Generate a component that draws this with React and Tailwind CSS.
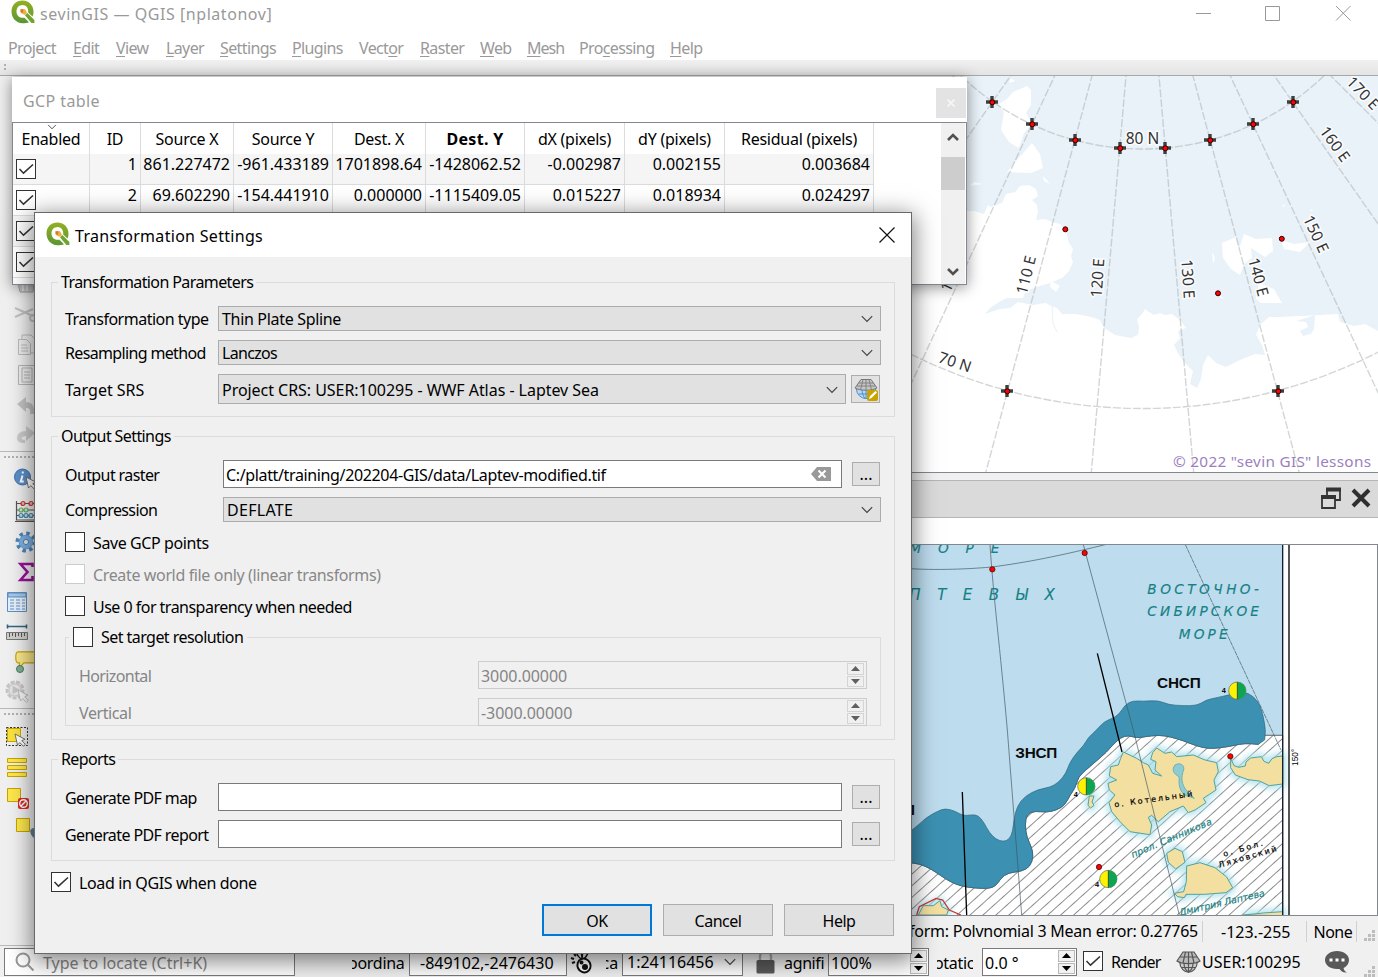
import React from 'react';

const QLogo = ({ className }) => (
  <svg className={className} viewBox="0 0 24 24">
    <defs>
      <linearGradient id="qg" x1="0" y1="0" x2="0" y2="1">
        <stop offset="0" stopColor="#93b023" />
        <stop offset="1" stopColor="#589632" />
      </linearGradient>
    </defs>
    <path fillRule="evenodd" fill="url(#qg)" d="M11.5 .5C17.5 .5 22.500 5 22.500 11.500c0 2-.3 3.500-1 5l-4.300-4c.5-4.500-2-7.500-5.700-7.500-3.600 0-6 2.800-6 6.500s2.400 6.300 6 6.300h2l4.500 4.500c-2 .8-4 1-6.500 1C5 22.800.5 18 .5 11.500S5 .5 11.500.5z" />
    <path fill="#f0b03c" d="M9.500 9.200h4.500l2 3.600-2.200 2.300-3.800-2z" />
    <path fill="#d9772b" d="M9.500 9.200h3l-.5 3.500-2.500-.5z" />
    <path fill="#6fa52d" d="M14 15.200l2.400-2.300 7 7v3.100h-3z" />
  </svg>
);

const Chevron = ({ className = 'h-2 w-3' }) => (
  <svg className={className} viewBox="0 0 12 8" fill="none" stroke="#444" strokeWidth="1.200">
    <path d="M.8 1.200L6 6.400l5.200-5.200" />
  </svg>
);

const Check = ({ on, disabled }) => (
  <span className={'block size-5 shrink-0 border bg-white ' + (disabled ? 'border-[#ccc]' : 'border-[#333]')}>
    {on && (
      <svg className="size-[18px]" viewBox="0 0 18 18" fill="none" stroke="#333" strokeWidth="1.600">
        <path d="M2.500 9l4 4.200L16 4.500" />
      </svg>
    )}
  </span>
);

const Combo = ({ children, className }) => (
  <div className={'flex items-center justify-between border border-[#acacac] bg-[#e1e1e1] pl-[3px] pr-[7px] ' + className}>
    <span>{children}</span>
    <Chevron />
  </div>
);

const DotsButton = ({ className = 'h-6' }) => (
  <div className={'flex w-7 shrink-0 items-center justify-center border border-[#adadad] bg-[#e1e1e1] tracking-normal ' + className}>...</div>
);

const Arrows = ({ dim }) => (
  <div className={'my-px flex w-[17px] shrink-0 flex-col gap-px ' + (dim ? 'mr-[2px]' : 'mr-px')}>
    {['M0 5L4.500 0 9 5z', 'M0 0L4.500 5 9 0z'].map((d) => (
      <div key={d} className={'flex flex-1 items-center justify-center border ' + (dim ? 'border-[#d4d4d4]' : 'border-[#b8b8b8] bg-[#f2f2f2]')}>
        <svg className="h-[5px] w-[9px]" viewBox="0 0 9 5"><path d={d} fill={dim ? '#606060' : '#000'} /></svg>
      </div>
    ))}
  </div>
);

/* ---------- main window toolbar ---------- */

const Cursor = ({ x, y }) => (
  <path transform={`translate(${x} ${y})`} d="M0 0l2.500 11 2.300-2.400 3.600 3.600 2-1.900-3.600-3.600 3.200-1.500z" fill="#fff" stroke="#666" strokeWidth=".9" />
);

const tools = [
  ['h-[30px]', <g key="t" fill="#d4d4d4" stroke="#aaa"><path d="M16 6h18v3H16zM18 10h16l-1 9H20z" /><path d="M23 11v7M27 11v7" stroke="#eee" strokeWidth="2" /></g>],
  ['h-[31px]', <g key="t" fill="none" stroke="#c2c2c2" strokeWidth="2"><path d="M15 5l18 8M15 14l18-8" /><circle cx="33" cy="15" r="3" /></g>],
  ['h-[30px]', <g key="t" fill="#eee" stroke="#bbb"><path d="M22 1h9l4 4v14H22z" /><path d="M18.500 5.500h8l4 4v11h-12z" /><path d="M21 11h6M21 14h7M21 17h7" /></g>],
  ['h-[31px]', <g key="t" fill="#eee" stroke="#b5b5b5"><path d="M18.500 1.500h16v19h-16z" /><path d="M22 4h10v14H22zM24 8h6M24 11h6M24 14h6" /></g>],
  ['h-[29px]', <path key="t" d="M17 9l9-7v5c6 0 9 4 8 12h-4c1-5-1-6-4-6v4z" fill="#c4c4c4" />],
  ['h-[43px]', <path key="t" d="M35 9l-9-7v5c-6 0-9 3-9 7s3 5 8 5v-3c-5 0-4-4 1-4v5z" fill="#ccc" />],
  ['h-[32px]', <g key="t"><circle cx="22.500" cy="9" r="8" fill="#5b8fc9" stroke="#3f73ae" /><path d="M23 3.500l-.5 2M22.500 7.500l-1.700 6h3" stroke="#fff" strokeWidth="2" fill="none" /><Cursor x={26} y={9} /></g>],
  ['h-[31px]', <g key="t" fill="none" stroke="#555" strokeWidth="1.200"><path d="M16.500 1v19H36M16 3.500h20M16 10h20M16 15.500h20M15 21.500h21" /><circle cx="23" cy="3.500" r="2" stroke="#c33" fill="#f2b4b4" /><circle cx="31" cy="3.500" r="2" stroke="#c33" fill="#f2b4b4" /><circle cx="21" cy="10" r="2" stroke="#6a6" fill="#cec" /><circle cx="26" cy="10" r="2" stroke="#6a6" fill="#cec" /><circle cx="21" cy="15.500" r="2" stroke="#48a" fill="#bde" /><circle cx="26" cy="15.500" r="2" stroke="#48a" fill="#bde" /><circle cx="31" cy="15.500" r="2" stroke="#48a" fill="#bde" /></g>],
  ['h-[30px]', <g key="t"><circle cx="26" cy="11" r="8.500" fill="none" stroke="#4d86bd" strokeWidth="4" strokeDasharray="3.400 3.270" /><circle cx="26" cy="11" r="6.800" fill="#7db1e3" stroke="#6a9fd4" /><circle cx="26" cy="11" r="2.600" fill="#efefef" stroke="#4d86bd" /></g>],
  ['h-[30px]', <path key="t" d="M32.500 6V3H20.500l7 8-7 8h12v-4" fill="none" stroke="#9b0f9b" strokeWidth="2.600" />],
  ['h-[30px]', <g key="t" stroke="#5e8fc4" fill="#e6f0fa"><path d="M7.500 1.500h19v19h-19z" /><path d="M8 2h18v4H8z" fill="#a5c8ea" /><path d="M10 9h4M16 9h4M22 9h3M10 12h4M16 12h4M22 12h3M10 15h4M16 15h4M22 15h3M10 18h4M16 18h4M22 18h3" /></g>],
  ['h-[30px]', <g key="t"><path d="M7 5.500h20M7.500 3.500v4M26.500 3.500v4" stroke="#2f6580" strokeWidth="1.600" /><path d="M6.500 11.500h21v7h-21z" fill="#cfcfcb" stroke="#777" /><path d="M9.500 12v4M12.500 12v3M15.500 12v4M18.500 12v3M21.500 12v4M24.500 12v3" stroke="#555" /></g>],
  ['h-[28px]', <g key="t"><path d="M18 .8h20v11H24l-5 5 .5-5h-1.500c-3 0-3-11 0-11z" fill="#fbe68c" stroke="#c9a400" strokeWidth="1.200" /><circle cx="20" cy="18" r="3.500" fill="#7fae92" stroke="#4c7d68" /></g>],
  ['h-[48px]', <g key="t" fill="#e4e4e4" stroke="#c6c6c6"><circle cx="15" cy="11" r="8" strokeWidth="3" strokeDasharray="4 1.500" /><circle cx="15" cy="11" r="6" /><path d="M13 7.500l6 3.500-6 3.500z" fill="#c4c4c4" /><path transform="translate(18 11)" d="M0 0l2.500 11 2.300-2.400 3.600 3.600 2-1.900-3.600-3.600 3.200-1.500z" fill="#f4f4f4" stroke="#bbb" /></g>],
  ['h-[31px]', <g key="t"><path d="M6.500 1.500h21v18h-21z" fill="none" stroke="#333" strokeDasharray="2 1.500" /><path d="M7.500 2.500h13v13h-13z" fill="#fae23c" stroke="#cba800" /><Cursor x={15} y={8} /></g>],
  ['h-[30px]', <g key="t" fill="#fde74c" stroke="#c9a300"><path d="M7.500 1.500h19v4h-19zM7.500 8.500h19v4h-19zM7.500 15.500h19v4h-19z" /></g>],
  ['h-[30px]', <g key="t"><path d="M7.500 1.500h13v13h-13z" fill="#fde74c" stroke="#c9a300" /><rect x="18" y="11" width="11" height="11" rx="2" fill="#d62b2b" /><circle cx="23.500" cy="16.500" r="3.800" fill="none" stroke="#fff" strokeWidth="1.400" /><path d="M21 19l5-5" stroke="#fff" strokeWidth="1.400" /></g>],
  ['h-[30px]', <g key="t"><path d="M16.500 1.500h13v13h-13z" fill="#fde74c" stroke="#c9a300" /><path d="M34 11c-5 0-5 6 0 10z" fill="#5f8291" /></g>],
];

const Tool = ({ h, art }) => (
  <div className={'shrink-0 ' + h}>
    <svg className="h-6 w-10" viewBox="0 0 40 24">{art}</svg>
  </div>
);

const Handle = ({ className }) => (
  <svg className={'h-[12px] w-10 shrink-0 ' + className} viewBox="0 0 40 12">
    <path d="M0 1.500h40" stroke="#b9b9b9" />
    <path d="M4 7h36" stroke="#b0b0b0" strokeWidth="2" strokeDasharray="2 2" />
  </svg>
);

/* ---------- upper map ---------- */

const crosses = [[992, 102], [1032, 124], [1075, 140], [1120, 148], [1165, 148], [1210, 140], [1253, 124], [1293, 102], [1007, 391], [1278, 391]];
const redDots = [[1065, 229], [1281.500, 238.500], [1217.700, 293]];
const meridians = [-45, -35, -25, -15, -5, 5, 15, 25, 35, 45];
const mapLabels = [
  ['80 N', 1142.500, 138, 0], ['110 E', 1026, 275, -76], ['120 E', 1097.500, 278, -86], ['130 E', 1188, 279, 86],
  ['140 E', 1258.500, 277, 75], ['150 E', 1316, 234, 65], ['160 E', 1335, 144, 54], ['170 E', 1363, 93, 46], ['70 N', 955, 362, 19], ['100 E', 953, 273, -65],
];

const UpperMap = () => (
  <svg className="h-[396px] w-[467px] shrink-0" viewBox="911 76 467 396">
    <rect x="911" y="76" width="467" height="397" fill="#e9f2f8" />
    <g fill="#fff">
      <path d="M911 211h63l10 3 4-9 3 2 11-4 4-9 9-2 5-6 9-1 7 4 2 7-6 4 5 5 1 7-2 8 9-1 7 3 8 2 6 8 3 11 4 6-2 7 2 6-4 9-7 7-12 5-10 3-9 3-6 4-2 5-16 0-8 4-9 6-5 6 6-2 9-3 10-1 8-6 15 3 13-2 3 2 8 3 5 6 14 0 15 3 9 3 4 8 11 7 16 3 7-3 1-8-2-8 5-5 3-5 4 3 5 3 6-2 5 2 7-1 9 7 5 7-8 3 2 7-6 7 4 8 6 9 9 9L1190 384l7 4 4-9 2-14 5-10 8 8 10 4 14-7 15-6 10 1-3-10-6-10 4-10 9-8h11l20-1 20-1 18-1 2 8 14 4 11-2 13 7V480H911z" />
      <path d="M999 104l9-6 5-6 14-6 4 4 0 15-5 8 6 11-8 9-5 15-10-6-8-12 3-18z" />
      <path d="M1032 143l8 11 3 14-12 5-24-1 10-12 8-9zM1011 78l4 3-6 2zM1043 176l7 8-6-3zM1051 281l9 5-4 6-6-5zM974 182l8 2-12 2z" />
      <path d="M1222 243l14-6 3 12 5-15 12 5 16-1 1 13-8 6-14-9 1 10-8 6-4 11-9-6-8-11zM1281 240l13 4 16-2-10 10-16-3zM1212 252l3 6-2 6zM1259 283l15 6 8 14-21 0-5-4z" />
      <path d="M1282 206l4-2-2 3zM1311 209l2 2-3 0zM1217 294l8 5-4-1zM1318 174l2 1z" />
    </g>
    <path d="M1296 321l10-3 9-3-1 14-3 5-8 2-3-5 8-4-2-5z" fill="#e9f2f8" />
    <path d="M1052 305l1 18 4 9" fill="none" stroke="#e9f2f8" />
    <g fill="none" stroke="#a9aead" strokeOpacity=".5" strokeWidth="1.400" strokeDasharray="8 2">
      <circle cx="1142.500" cy="-112.500" r="261.500" />
      <circle cx="1142.500" cy="-112.500" r="521" />
      {meridians.map((m) => <path key={m} d="M1142.500 60V640" transform={`rotate(${-m} 1142.500 -112.500)`} />)}
    </g>
    <g fontFamily="'Noto Sans', sans-serif" fontSize="15.500" textAnchor="middle" fill="#333" stroke="#fff" strokeOpacity=".85" strokeWidth="3" paintOrder="stroke">
      {mapLabels.map(([t, x, y, r]) => <text key={t} transform={`translate(${x} ${y}) rotate(${r})`} y="5.500">{t}</text>)}
    </g>
    {crosses.map(([x, y]) => <path key={x} d={`M${x - 6} ${y}h12M${x} ${y - 6}v12`} stroke="#3a4240" strokeWidth="3.400" />)}
    {crosses.concat(redDots).map(([x, y]) => <circle key={x} cx={x + .3} cy={y + .3} r="2.500" fill="#f00" stroke="#300" strokeWidth="1" />)}
    <text x="1371" y="466.500" textAnchor="end" fontFamily="'Noto Sans', sans-serif" fontSize="15.300" textLength="198" fill="#9b7fbe">© 2022 "sevin GIS" lessons</text>
  </svg>
);

/* ---------- lower map ---------- */

const upperEdge = [[0, 305], [25, 285], [50, 262], [80, 245], [105, 235], [135, 243], [160, 258], [185, 254], [205, 256], [222, 278], [238, 308], [258, 328], [280, 335], [298, 328], [308, 305], [312, 265], [322, 228], [345, 198], [385, 178], [420, 172], [445, 158], [468, 130], [478, 100], [500, 68], [520, 48], [535, 22], [560, 0], [582, -25], [608, -35], [628, -48], [645, -75], [668, -88], [700, -86], [745, -89], [775, -76], [815, -73], [862, -73], [888, -90], [920, -97], [960, -106], [1000, -116], [1030, -102], [1050, -75], [1060, -40], [1067, 0], [1064, 30]];
const lowerEdge = [[1045, 43], [1020, 40], [990, 42], [955, 50], [900, 57], [860, 48], [820, 32], [780, 20], [745, 15], [705, 20], [680, 24], [655, 16], [632, 22], [605, 48], [590, 66], [560, 92], [530, 118], [505, 140], [495, 175], [480, 195], [465, 225], [440, 240], [410, 247], [375, 243], [350, 252], [345, 285], [350, 322], [365, 352], [370, 380], [360, 410], [335, 424], [295, 428], [272, 445], [258, 468], [235, 476], [195, 474], [155, 469], [120, 455], [90, 435], [60, 415], [30, 402], [0, 398]];

/* runs a quadratic curve through the midpoints of the given points */
const smooth = (pts) =>
  pts.slice(1, -1).map(([x, y], i) => {
    const [nx, ny] = pts[i + 2];
    return `Q${x} ${y} ${(x + nx) / 2} ${(y + ny) / 2}`;
  }).join('') + 'L' + pts[pts.length - 1].join(' ');

const bandPath = `M0 305${smooth(upperEdge)}L1045 43${smooth(lowerEdge)}z`;
const coastPath = `M1118 16H1066L1045 43${smooth(lowerEdge)}V560H1118z`;

const Pie = ({ x, y, label, lx, ly }) => (
  <g>
    <circle cx={x} cy={y} r="26" fill="#fff200" stroke="#567" strokeWidth="2" />
    <path d={`M${x} ${y - 26}a26 26 0 0 1 0 52z`} fill="#0ea552" />
    <path d={`M${x} ${y - 26}v52`} stroke="#353" strokeWidth="3" />
    <text x={lx} y={ly} fontSize="22" fontWeight="bold">{label}</text>
  </g>
);

const islands = [
  'M640 66L680 85 700 98 715 105 728 130 755 138 735 120 738 95 722 88 728 68 740 54 765 70 785 66 800 80 850 75 885 90 920 98 925 125 912 150 918 180 880 205 888 218 855 240 835 248 820 228 780 245 745 275 725 256 715 262 725 285 720 314 660 305 630 275 605 245 597 218 615 195 598 180 594 160 620 150 598 138 602 110 625 105 632 85z',
  'M962 85l10 22 14 5 20-4 2-12 14-12 32-4 8 14 14 6 10-14 14-6 18-2v84l-40 5-30-14-34-4-38-14-14-22z',
  'M770 370l25-15 22 10 8 32-28 20-22-20z',
  'M830 408l40-10 45 15 35 28 18 32-20 15-65 5-55 0-5 10-20-3-10-10 28-5 8-30z',
  'M538 198l14 0-6 18 6 10-10 8-8-8z',
  'M25 555l15-28 30 0 20-15 5 18 20 10-5 15z',
  'M1000 555l60-6 58-4v12z',
];

const LowerMap = () => (
  <svg className="h-[370px] w-[467px] shrink-0" viewBox="911 545 467 370" fontFamily="'Liberation Sans', Arial, sans-serif">
    <defs>
      <pattern id="hatch" width="26" height="26" patternUnits="userSpaceOnUse" patternTransform="rotate(-42)">
        <path d="M0 13h26" stroke="#666" strokeWidth="2.200" />
      </pattern>
      <filter id="glow" x="-30%" y="-30%" width="160%" height="160%"><feGaussianBlur stdDeviation="9" /></filter>
    </defs>
    <rect x="911" y="545" width="467" height="371" fill="#fff" />
    <rect x="911" y="545" width="372" height="371" fill="#bddcee" />
    <g transform="translate(910 730) scale(.33333)">
      {['#fff', 'url(#hatch)'].map((f) => <path key={f} fill={f} stroke="#666" strokeWidth="2" d={coastPath} />)}
      <path fill="#3c91b3" stroke="#28647d" strokeWidth="2" d={bandPath} />
      <g fill="#9fdfe6" stroke="#a9dfea" strokeWidth="22" opacity=".8" filter="url(#glow)">{islands.map((d) => <path key={d} d={d} />)}</g>
      <g fill="#f3dfa0" stroke="#4fa3a0" strokeWidth="3" strokeLinejoin="round">{islands.map((d) => <path key={d} d={d} />)}</g>
      <path d="M795 105c12-8 30-2 26 15-8 20-8 45 12 65l20 20-30-10c-20-20-15-40-16-55-15-8-24-20-12-35z" fill="#8ecbd4" stroke="#4fa3a0" strokeWidth="2" />
      <path d="M20 555l8-25 50-25 20 5 20 30 35 15" stroke="#c33" strokeWidth="4" fill="none" />
      <g fill="none" stroke="#3e5661" strokeWidth="2">
        <path d="M0 -484C100 -478 200 -485 246 -489 350 -503 440 -520 610 -562M240 -556C250 -400 270 -250 292 0L335 555M520 -556L670 0 808 555" />
        <path d="M826 -556L1113 60" strokeDasharray="14 2" />
      </g>
      <path d="M562 -230L636 66M157 186L170 555" stroke="#000" strokeWidth="4" />
      <g fontWeight="bold" fontSize="46" fill="#0b0b0b">
        <text x="741" y="-126" textLength="131">СНСП</text>
        <text x="316" y="85" textLength="126">ЗНСП</text>
        <text x="-18" y="255">П</text>
      </g>
      <g fill="#168184" stroke="#168184" strokeWidth=".4" fontStyle="italic" fontFamily="'DejaVu Sans', sans-serif" fontSize="41">
        <text x="-2" y="-532" textLength="270">МОРЕ</text>
        <text x="-2" y="-391" textLength="436" fontSize="45">ПТЕВЫХ</text>
        <text x="712" y="-409" textLength="335">ВОСТОЧНО-</text>
        <text x="712" y="-341" textLength="335">СИБИРСКОЕ</text>
        <text x="806" y="-273" textLength="147">МОРЕ</text>
      </g>
      <g fontFamily="'DejaVu Sans', sans-serif" fontSize="24" stroke="#000" strokeWidth=".6">
        <text transform="translate(614 232) rotate(-8)" textLength="236">о. Котельный</text>
        <text transform="translate(942 380) rotate(-16)" textLength="122">о. Бол.</text>
        <text transform="translate(928 413) rotate(-16)" textLength="180">Ляховский</text>
      </g>
      <g fontFamily="'DejaVu Sans', sans-serif" fill="#168184" stroke="#168184" strokeWidth=".6" fontStyle="italic" fontSize="28">
        <text transform="translate(668 384) rotate(-23)" textLength="260">прол. Санникова</text>
        <text transform="translate(810 557) rotate(-13)" textLength="262">Дмитрия Лаптева</text>
      </g>
      <Pie x={982} y={-118} label="4" lx={935} ly={-110} />
      <Pie x={529} y={169} label="4" lx={491} ly={202} />
      <Pie x={595} y={447} label="4" lx={555} ly={472} />
      {[[247, -482], [524, -531], [961, 79], [567, 411]].map(([x, y]) => <circle key={x} cx={x} cy={y} r="8" fill="#f00" stroke="#300" strokeWidth="2" />)}
      <path d="M1118 -556V556" stroke="#123" strokeWidth="4" />
      <path d="M1137 -556V556" stroke="#000" strokeWidth="4" />
      <text transform="translate(1165 108) rotate(-90)" fontSize="25" textLength="52">150°</text>
    </g>
  </svg>
);

/* ---------- GCP table window ---------- */

const columns = [
  ['Enabled', 'w-[77px]'], ['ID', 'w-[51px]'], ['Source X', 'w-[93px]'], ['Source Y', 'w-[99px]'], ['Dest. X', 'w-[93px]'],
  ['Dest. Y', 'w-[99px] font-bold tracking-[0.3px]'], ['dX (pixels)', 'w-[100px]'], ['dY (pixels)', 'w-[100px]'], ['Residual (pixels)', 'w-[149px]'],
];
const gcps = [
  ['1', '861.227472', '-961.433189', '1701898.64', '-1428062.52', '-0.002987', '0.002155', '0.003684'],
  ['2', '69.602290', '-154.441910', '0.000000', '-1115409.05', '0.015227', '0.018934', '0.024297'],
  ['', '', '', '', '', '', '', ''],
  ['', '', '', '', '', '', '', ''],
];

const GcpWindow = () => (
  <div className="absolute left-3 top-[77px] flex h-[208px] w-[955px] flex-col overflow-hidden bg-white shadow-[0_2px_14px_rgba(0,0,0,.45)]">
    <div className="flex h-[45px] items-center justify-between pl-[11px] text-[#999]">
      <span className="pt-[3px] tracking-[0.4px]">GCP table</span>
      <span className="mr-px mt-[7px] flex size-[30px] items-center justify-center bg-[#e3e3e3]">
        <svg className="size-2" viewBox="0 0 8 8"><path d="M.5 .5l7 7M7.500 .5l-7 7" stroke="#f6f6f6" strokeWidth="1.600" /></svg>
      </span>
    </div>
    <div className="flex min-h-0 flex-1 border border-[#828790]">
      <div className="flex w-[928px] flex-col overflow-hidden">
        <div className="flex h-[31px] shrink-0 tracking-[-0.25px]">
          {columns.map(([t, w], i) => (
            <div key={t} className={'relative shrink-0 border-r border-[#dcdcdc] pt-[5px] text-center leading-[22px] ' + w}>
              {t}
              {i === 0 && <Chevron className="absolute left-[33px] top-[1px] h-[6px] w-3" />}
            </div>
          ))}
        </div>
        {gcps.map((r, n) => (
          <div key={n} className={'flex h-[31px] shrink-0 ' + (n % 2 ? '' : 'bg-[linear-gradient(#f5f5f5,#f5f5f5)] bg-[length:861px_100%] bg-no-repeat')}>
            <div className="w-[77px] shrink-0 border-b border-r border-[#dcdcdc] pl-[3px] pt-[5px]"><Check on /></div>
            {r.map((v, i) => (
              <div key={i} className={'shrink-0 border-b border-r border-[#dcdcdc] pr-[3px] text-right leading-[21px] ' + columns[i + 1][1].split(' ')[0]}>{v}</div>
            ))}
          </div>
        ))}
      </div>
      <div className="flex w-[24px] flex-col items-center bg-[#f0f0f0] pb-[8px] pt-[10px]">
        <svg className="h-2 w-3" viewBox="0 0 12 8" fill="none" stroke="#505050" strokeWidth="2.600"><path d="M1 7l5-5 5 5" /></svg>
        <div className="mt-4 h-[33px] w-6 bg-[#cdcdcd]" />
        <svg className="mt-auto h-2 w-3" viewBox="0 0 12 8" fill="none" stroke="#505050" strokeWidth="2.600"><path d="M1 1l5 5 5-5" /></svg>
      </div>
    </div>
  </div>
);

/* ---------- transformation dialog ---------- */

const Group = ({ title, className, children }) => (
  <fieldset className={'min-w-0 border border-[#dcdcdc] ' + className}>
    <legend className="ml-[6px] h-[22px] px-[3px] leading-[23px]">{title}</legend>
    {children}
  </fieldset>
);

const Label = ({ w, children }) => <span className={'shrink-0 ' + w}>{children}</span>;

const Spin = ({ children }) => (
  <div className="flex h-7 w-[389px] border border-[#ccc]">
    <span className="flex-1 pl-[2px] leading-[28px] tracking-[-0.05px]">{children}</span>
    <Arrows dim />
  </div>
);

const Dialog = () => (
  <div className="absolute left-[34px] top-[212px] flex h-[742px] w-[878px] flex-col whitespace-nowrap border border-[#686868] bg-[#f0f0f0] tracking-[-0.6px] shadow-[0_5px_22px_2px_rgba(0,0,0,.5)]">
    <div className="flex h-11 shrink-0 items-center bg-white pl-[11px] pr-4">
      <QLogo className="-mt-[2px] size-6" />
      <span className="ml-[5px] pt-[1px] tracking-[0.3px]">Transformation Settings</span>
      <svg className="-mt-px ml-auto size-4" viewBox="0 0 16 16" stroke="#111" strokeWidth="1.200"><path d="M.5 .5l15 15M15.500 .5l-15 15" /></svg>
    </div>
    <div className="flex flex-col px-4 pt-[14px]">
      <Group title="Transformation Parameters" className="h-[146px]">
        <div className="mt-[13px] flex h-[25px] items-center pl-[13px]"><Label w="w-[153px] tracking-[-0.5px]">Transformation type</Label><Combo className="h-[25px] w-[663px] tracking-[-0.32px]">Thin Plate Spline</Combo></div>
        <div className="mt-[9px] flex h-[25px] items-center pl-[13px]"><Label w="w-[153px] tracking-[-0.65px]">Resampling method</Label><Combo className="h-[25px] w-[663px] tracking-[-0.7px]">Lanczos</Combo></div>
        <div className="mt-[9px] flex h-[30px] items-center pl-[13px]">
          <Label w="w-[153px] pt-[2px] tracking-normal">Target SRS</Label>
          <Combo className="h-[30px] w-[628px] pt-px tracking-[-0.04px]">Project CRS: USER:100295 - WWF Atlas - Laptev Sea</Combo>
          <div className="ml-[5px] flex h-7 w-[29px] items-center justify-center border border-[#adadad] bg-[#e1e1e1]">
            <svg className="size-[24px]" viewBox="0 0 24 24" fill="none">
              <circle cx="12" cy="12" r="9.500" fill="#b7daf7" stroke="#4d8ec8" />
              <path d="M5 17h14M12 12v10M8 12c0 4 1 7 3 9.500M16 12c0 4-1 7-3 9.500" stroke="#4d8ec8" />
              <path d="M7 2.500h10l6 8.500c-5 3-17 3-22 0z" fill="#c4c4c4" stroke="#777" />
              <path d="M12 2.500v11M9 2.500L6.500 13M15 2.500L17.500 13M5 6h14M3 9h18" stroke="#777" strokeWidth=".8" />
              <rect x="13" y="13" width="11" height="11" rx="2" fill="#c9a200" />
              <path d="M15 22l1-3 5.500-5 1.500 1.500-5.500 5.500z" fill="#fff" />
            </svg>
          </div>
        </div>
      </Group>
      <Group title="Output Settings" className="mt-2 h-[315px]">
        <div className="mt-[13px] flex h-7 items-center pl-[13px]">
          <Label w="w-[158px] pt-[2px]">Output raster</Label>
          <div className="flex h-7 w-[619px] items-center justify-between border border-[#7a7a7a] bg-white pl-[2px] pr-[10px] tracking-[-0.36px]">
            <span className="pt-px">C:/platt/training/202204-GIS/data/Laptev-modified.tif</span>
            <svg className="h-[14px] w-5" viewBox="0 0 20 14"><path d="M0 7l6-7h14v14H6z" fill="#999" /><path d="M7.500 3.500l7 7M14.500 3.500l-7 7" stroke="#fff" strokeWidth="2" /></svg>
          </div>
          <span className="ml-[10px]"><DotsButton /></span>
        </div>
        <div className="mt-[9px] flex h-[25px] items-center pl-[13px]"><Label w="w-[158px]">Compression</Label><Combo className="h-[25px] w-[658px] tracking-[0.3px]">DEFLATE</Combo></div>
        <div className="mt-[10px] flex flex-col gap-3 pl-[13px] tracking-[-0.4px]">
          <div className="flex h-5 items-center gap-2"><Check /><span className="pt-[2px]">Save GCP points</span></div>
          <div className="flex h-5 items-center gap-2 text-[#888]"><Check disabled /><span className="pt-[2px] tracking-[-0.36px]">Create world file only (linear transforms)</span></div>
          <div className="flex h-5 items-center gap-2"><Check /><span className="pt-[2px] tracking-[-0.52px]">Use 0 for transparency when needed</span></div>
        </div>
        <fieldset className="ml-[13px] mt-[10px] h-[100px] w-[816px] border border-[#dcdcdc] text-[#858585]">
          <legend className="ml-[3px] flex h-[22px] items-center gap-2 px-1 tracking-[-0.55px] text-black"><Check /><span>Set target resolution</span></legend>
          <div className="mt-[13px] flex h-7 items-center pl-[13px]"><Label w="w-[399px] pt-[2px]">Horizontal</Label><Spin>3000.00000</Spin></div>
          <div className="mt-[9px] flex h-7 items-center pl-[13px]"><Label w="w-[399px] pt-[2px] tracking-[-0.4px]">Vertical</Label><Spin>-3000.00000</Spin></div>
        </fieldset>
      </Group>
      <Group title="Reports" className="mt-2 h-[113px]">
        {['Generate PDF map', 'Generate PDF report'].map((t, i) => (
          <div key={t} className={'flex h-7 items-center pl-[13px] ' + (i ? 'mt-[9px]' : 'mt-[13px]')}>
            <Label w="w-[153px] pt-[2px]">{t}</Label>
            <div className="h-7 w-[624px] border border-[#7a7a7a] bg-white" />
            <span className="ml-[10px]"><DotsButton /></span>
          </div>
        ))}
      </Group>
      <div className="mt-[11px] flex h-5 items-center gap-2 tracking-[-0.36px]"><Check on /><span className="pt-[2px]">Load in QGIS when done</span></div>
      <div className="mr-px mt-3 flex justify-end gap-[11px] tracking-[-0.5px]">
        {['OK', 'Cancel', 'Help'].map((t) => (
          <div key={t} className={'flex h-8 w-[110px] items-center justify-center bg-[#e1e1e1] pt-[2px] ' + (t === 'OK' ? 'border-2 border-[#0078d7]' : 'border border-[#adadad]')}>{t}</div>
        ))}
      </div>
    </div>
  </div>
);

const menus = [
  ['Pro', 'j', 'ect', 'w-[65px]'], ['', 'E', 'dit', 'w-[43px]'], ['', 'V', 'iew', 'w-[50px]'], ['', 'L', 'ayer', 'w-[54px]'],
  ['', 'S', 'ettings', 'w-[72px]'], ['', 'P', 'lugins', 'w-[67px]'], ['Vect', 'o', 'r', 'w-[61px]'], ['', 'R', 'aster', 'w-[60px]'],
  ['', 'W', 'eb', 'w-[47px]'], ['', 'M', 'esh', 'w-[52px] tracking-[-1px]'], ['Pro', 'c', 'essing', 'w-[91px]'], ['', 'H', 'elp', 'w-[50px]'],
];

const Grip = () => (
  <svg className="size-[11px]" viewBox="0 0 11 11" fill="#bdbdbd"><path d="M8 0h3v3H8zM4 4h3v3H4zM8 4h3v3H8zM0 8h3v3H0zM4 8h3v3H4zM8 8h3v3H8z" /></svg>
);

const StatusBar = () => (
  <div className="flex h-[31px] shrink-0 items-start whitespace-nowrap bg-[#f0f0f0] pl-[4px] pt-[2px]">
    <div className="flex h-7 w-[291px] shrink-0 items-center gap-2 border border-[#7a7a7a] bg-white pl-[10px] text-[#858585]">
      <svg className="size-5" viewBox="0 0 20 20" fill="none" stroke="#999" strokeWidth="2"><circle cx="8" cy="8" r="6.500" /><path d="M12.500 12.500l6 6" /></svg>
      <span className="pt-[2px]">Type to locate (Ctrl+K)</span>
    </div>
    <div className="ml-[57px] flex h-7 w-[53px] shrink-0 items-center justify-center overflow-hidden pt-[2px] tracking-[-0.3px]">Coordinate</div>
    <div className="ml-[4px] h-7 w-[158px] shrink-0 border border-[#7a7a7a] bg-white pl-[10px] leading-[29px]">-849102,-2476430</div>
    <svg className="ml-[3px] h-7 w-[24px] shrink-0" viewBox="0 0 24 28" fill="none" stroke="#111" strokeWidth="2">
      <path d="M11 11C6 7 5 2 7 0c3 2 5 6 5 10C12 5 14 1 18 0c1 4-1 8-4 11" fill="#eee" strokeWidth="1.500" />
      <ellipse cx="14" cy="17.500" rx="6.500" ry="7" fill="#fff" transform="rotate(-25 14 17.500)" /><circle cx="15" cy="19" r="2" fill="#111" /><circle cx="11.500" cy="14.500" r="1" fill="#111" /><path d="M1 10l3 1M2 15l3-1M4 6l2 2" />
    </svg>
    <div className="ml-[12px] flex h-7 w-3 shrink-0 items-center justify-center overflow-hidden pt-[2px]">Scale</div>
    <div className="ml-[4px] flex h-7 w-[121px] shrink-0 items-center justify-between border border-[#7a7a7a] bg-white pl-1 pr-[6px]">1:24116456<Chevron /></div>
    <svg className="ml-[13px] h-7 w-[19px] shrink-0" viewBox="0 0 19 28"><path d="M4 14V8a5.500 5.500 0 0 1 11 0v6" fill="none" stroke="#aaa" strokeWidth="2.500" /><rect x=".5" y="12" width="18" height="13.500" rx="1.500" fill="#595959" /></svg>
    <div className="ml-[9px] flex h-7 w-[41px] shrink-0 items-center justify-center overflow-hidden pt-[2px] tracking-[-0.4px]">Magnifier</div>
    <div className="ml-[3px] flex h-7 w-[101px] shrink-0 border border-[#7a7a7a] bg-white"><span className="flex-1 pl-[2px] leading-[29px]">100%</span><Arrows /></div>
    <div className="ml-[8px] flex h-7 w-[36px] shrink-0 items-center justify-center overflow-hidden pt-[2px] tracking-[-0.3px]">Rotation</div>
    <div className="ml-[9px] flex h-7 w-[95px] shrink-0 border border-[#7a7a7a] bg-white"><span className="flex-1 pl-[2px] leading-[28px]">0.0 °</span><Arrows /></div>
    <div className="ml-[6px] flex h-7 w-[78px] shrink-0 items-center gap-2 tracking-[-0.8px]"><span className="-mt-[3px]"><Check on /></span>Render</div>
    <svg className="ml-[15px] mt-[2px] h-6 w-[25px] shrink-0" viewBox="0 0 25 24" fill="none" stroke="#555" strokeWidth="1.200">
      <path d="M3.500 11c1 15 17 15 18 0z" fill="#ccc" />
      <path d="M7 2h11l6 9c-5 3.500-18 3.500-23 0z" fill="#bbb" /><path d="M12.500 2v20M9.500 2L7 13M15.500 2L18 13M4 7h17M8 13c0 4 1 7 4.500 9 3.500-2 4.500-5 4.500-9M5 17.500h15" />
    </svg>
    <span className="pl-px leading-[29px]">USER:100295</span>
    <svg className="ml-auto mt-[2px] h-[24px] w-[24px] shrink-0" viewBox="0 0 24 24"><path d="M12 1c7 0 12 4 12 9 0 4-3 7-5.500 8 .5 2 1.500 3.500 3.500 4.500-4 .5-6-1.500-7.500-3.500H12C5 19 0 15 0 10s5-9 12-9z" fill="#595959" /><path d="M4.500 8.500h3v3h-3zM10.500 8.500h3v3h-3zM16.500 8.500h3v3h-3z" fill="#fff" /></svg>
    <span className="ml-[15px] mr-[3px] mt-[18px]"><Grip /></span>
  </div>
);

export default function App() {
  return (
    <div className="relative flex h-[977px] w-[1378px] flex-col overflow-hidden bg-[#f0f0f0] text-[16px] leading-[22px] text-black [font-family:'Noto_Sans',sans-serif]">
      <header className="flex h-7 shrink-0 items-center bg-white pl-[11px] pr-[27px] text-[#999]">
        <QLogo className="size-6 -mt-[5px]" />
        <span className="-mt-[1px] ml-[5px] tracking-[0.55px]">sevinGIS — QGIS [nplatonov]</span>
        <svg className="-mt-[3px] ml-auto h-4 w-[156px]" viewBox="0 0 156 16" fill="none" stroke="#999" strokeWidth="1"><path d="M1 8.500h15M70.500 1.500h14v14h-14zM141 1l14.500 14.500M155.500 1L141 15.500" /></svg>
      </header>
      <nav className="flex h-8 shrink-0 items-center bg-white pl-2 pt-[8px] tracking-[-0.62px] text-[#999]">
        {menus.map(([a, b, c, w]) => <span key={a + b + c} className={w}>{a}<u className="underline-offset-2">{b}</u>{c}</span>)}
      </nav>
      <div className="flex h-4 shrink-0 items-center border-b border-[#a8a8a8] bg-[linear-gradient(#f0f0f0,#e4e4e4)] pl-1 text-[#bbb]">
        <svg className="h-[7px] w-1" viewBox="0 0 4 7"><path d="M0 0h2v2H0zM0 4h2v2H0z" fill="#b0b0b0" /></svg>
      </div>
      <div className="flex min-h-0 flex-1">
        <div className="flex w-[911px] shrink-0 flex-col overflow-hidden border-b border-[#b9b9b9] pt-[197px]">
          {tools.map(([h, art], i) => (
            <React.Fragment key={i}>
              {i === 6 && <Handle className="-mt-[17px] mb-[6px]" />}
              {i === 14 && <Handle className="-mt-[20px] mb-[7px]" />}
              <Tool h={h} art={art} />
            </React.Fragment>
          ))}
        </div>
        <div className="flex min-w-0 flex-1 flex-col">
          <div className="flex h-[397px] shrink-0 border-b border-r border-[#828790]"><UpperMap /></div>
          <div className="mt-[7px] flex h-[38px] shrink-0 items-center justify-end gap-[10px] border-y border-[#b5b5b5] bg-[#dadada] pb-[2px] pr-[7px]">
            <svg className="h-[22px] w-5" viewBox="0 0 20 22" fill="none" stroke="#333" strokeWidth="1.800"><path d="M6 8V2h13v11h-5M1 9h13v12H1z" /><path d="M5 2.500h15M0 10h15" strokeWidth="4" /></svg>
            <svg className="size-5" viewBox="0 0 20 20" stroke="#2f2f2f" strokeWidth="4"><path d="M2 2l16 16M18 2L2 18" /></svg>
          </div>
          <div className="h-[26px] shrink-0 bg-white" />
          <div className="h-[372px] shrink-0 overflow-hidden border-y border-r border-[#828790]"><LowerMap /></div>
          <div className="flex min-h-0 flex-1 items-center whitespace-nowrap">
            <div className="flex w-[287px] shrink-0 justify-end overflow-hidden tracking-[-0.25px]">Transform: Polvnomial 3 Mean error: 0.27765</div>
            <div className="ml-1 h-[21px] border-l border-[#d0d0d0] pl-[18px]">-123.-255</div>
            <div className="ml-[15px] h-[21px] border-l border-[#d0d0d0] pl-[7px] tracking-[-0.5px]">None</div>
            <div className="ml-1 h-[21px] border-l border-[#d0d0d0]" />
            <span className="ml-auto mr-[3px] mt-2"><Grip /></span>
          </div>
        </div>
      </div>
      <StatusBar />
      <GcpWindow />
      <Dialog />
    </div>
  );
}
